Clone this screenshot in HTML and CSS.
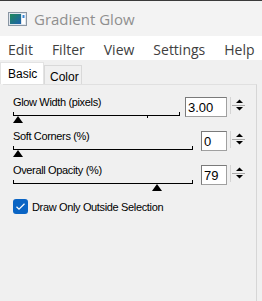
FILE: index.html
```html
<!DOCTYPE html>
<html lang="en">
  <head>
    <meta charset="UTF-8" />
    <meta name="viewport" content="width=device-width, initial-scale=1.0" />
    <title>Gradient Glow</title>
    <link rel="stylesheet" href="styles.css">
  </head>
  <body>
    <div class="window">
      <div class="titlebar">
        <svg class="app-icon" width="19" height="14" viewBox="0 0 19 14">
          <defs>
            <linearGradient id="glow" x1="0" y1="0" x2="1" y2="1">
              <stop offset="0" stop-color="#1f8a5a" />
              <stop offset="1" stop-color="#1d5fae" />
            </linearGradient>
          </defs>
          <rect x="0.5" y="0.5" width="18" height="13" fill="#dfe6ee" stroke="#8a96a3" />
          <rect x="2" y="2" width="11" height="10" fill="url(#glow)" />
          <rect x="14" y="2" width="3" height="10" fill="#ffffff" />
          <rect x="14.5" y="3" width="2" height="3" fill="#3a86d4" />
        </svg>
        <span class="title">Gradient Glow</span>
      </div>

      <nav class="menubar">
        <span>Edit</span>
        <span>Filter</span>
        <span>View</span>
        <span>Settings</span>
        <span>Help</span>
      </nav>

      <div class="tabs">
        <div class="tab active">Basic</div>
        <div class="tab">Color</div>
      </div>

      <div class="panel">
        <div class="setting">
          <div class="setting-main">
            <div class="label">Glow Width (pixels)</div>
            <div class="track">
              <div class="rail"></div>
              <span class="tick" style="left: 134px"></span>
              <span class="thumb" style="left: 0px"></span>
            </div>
          </div>
          <div class="number wide">3.00</div>
          <svg class="spin" width="15" height="17" viewBox="0 0 15 17">
            <line x1="0.5" y1="0" x2="0.5" y2="17" stroke="#d4d4d4" />
            <polygon points="6,6 9.5,2.5 13,6" fill="#000" />
            <line x1="2" y1="8.5" x2="15" y2="8.5" stroke="#a8a8a8" />
            <polygon points="6,10 13,10 9.5,13.5" fill="#000" />
          </svg>
        </div>

        <div class="setting">
          <div class="setting-main">
            <div class="label">Soft Corners (%)</div>
            <div class="track">
              <div class="rail"></div>
              <span class="thumb" style="left: 0px"></span>
            </div>
          </div>
          <div class="number">0</div>
          <svg class="spin" width="15" height="17" viewBox="0 0 15 17">
            <line x1="0.5" y1="0" x2="0.5" y2="17" stroke="#d4d4d4" />
            <polygon points="6,6 9.5,2.5 13,6" fill="#000" />
            <line x1="2" y1="8.5" x2="15" y2="8.5" stroke="#a8a8a8" />
            <polygon points="6,10 13,10 9.5,13.5" fill="#000" />
          </svg>
        </div>

        <div class="setting">
          <div class="setting-main">
            <div class="label">Overall Opacity (%)</div>
            <div class="track">
              <div class="rail"></div>
              <span class="thumb" style="left: 139px"></span>
            </div>
          </div>
          <div class="number">79</div>
          <svg class="spin" width="15" height="17" viewBox="0 0 15 17">
            <line x1="0.5" y1="0" x2="0.5" y2="17" stroke="#d4d4d4" />
            <polygon points="6,6 9.5,2.5 13,6" fill="#000" />
            <line x1="2" y1="8.5" x2="15" y2="8.5" stroke="#a8a8a8" />
            <polygon points="6,10 13,10 9.5,13.5" fill="#000" />
          </svg>
        </div>

        <label class="check">
          <span class="check-box">
            <svg width="15" height="15" viewBox="0 0 15 15">
              <polyline points="3.5,7.8 6,10.2 11.5,4.8" fill="none" stroke="#fff" stroke-width="1.2" />
            </svg>
          </span>
          Draw Only Outside Selection
        </label>
      </div>
    </div>
  </body>
</html>
```

FILE: styles.css
```css
* {
  box-sizing: border-box;
  margin: 0;
  padding: 0;
}

body {
  background: #f0f0f0;
  font-family: "Liberation Sans", Arial, sans-serif;
}

.window {
  width: 262px;
  height: 301px;
  background: #f0f0f0;
  overflow: hidden;
}

.titlebar {
  height: 36px;
  display: flex;
  align-items: center;
  padding-left: 8px;
  background: #f3f3f3;
  border-top: 1px solid #3a3a3a;
}

.app-icon {
  margin-top: 1px;
}

.title {
  margin-left: 7px;
  font-family: "Open Sans", sans-serif;
  font-size: 15px;
  color: #8f8f8f;
}

.menubar {
  height: 24px;
  display: flex;
  align-items: center;
  gap: 19px;
  padding: 2px 0 0 8px;
  background: #ffffff;
  font-family: "Open Sans", sans-serif;
  font-size: 14px;
  color: #404040;
}

.tabs {
  height: 24px;
  display: flex;
  align-items: flex-end;
  padding-top: 2px;
}

.tab {
  height: 19px;
  width: 38px;
  padding: 4px 0 0 5px;
  font-size: 12px;
  color: #000;
  background: #f0f0f0;
  border: 1px solid #d9d9d9;
  border-bottom: none;
}

.tab.active {
  height: 22px;
  width: 44px;
  padding: 4px 0 0 7px;
  background: #ffffff;
  border-color: #e3e3e3;
}

.panel {
  height: 217px;
  width: 254px;
  margin-left: 3px;
  padding: 11px 11px 0 10px;
  background: #f0f0f0;
  border-top: 1px solid #e0e0e0;
  border-right: 1px solid #d6d6d6;
  font-size: 11px;
  letter-spacing: -0.35px;
  color: #000;
}

.setting {
  height: 34px;
  display: flex;
  align-items: flex-start;
}

.setting-main {
  flex: 1;
}

.label {
  height: 13px;
  line-height: 13px;
}

.track {
  position: relative;
  height: 12px;
  margin-right: 8px;
}

.setting:first-child .track {
  margin-right: 5px;
}

.rail {
  height: 4px;
  margin-top: 3px;
  border: 1px solid #000;
  border-top: none;
}

.tick {
  position: absolute;
  top: 3px;
  width: 1px;
  height: 3px;
  background: #000;
}

.thumb {
  position: absolute;
  top: 4px;
  width: 0;
  height: 0;
  border-left: 5.5px solid transparent;
  border-right: 5.5px solid transparent;
  border-bottom: 7px solid #000;
}

.number {
  width: 26px;
  height: 20px;
  margin-top: 1px;
  padding: 2px 0 0 2px;
  background: #fff;
  border: 1px solid #7a7a7a;
  border-right-color: #a0a0a0;
  border-bottom-color: #a0a0a0;
  font-size: 13px;
  line-height: 15px;
  letter-spacing: 0;
}

.number.wide {
  width: 42px;
}

.spin {
  margin-left: 3px;
  margin-top: 1px;
}

.check {
  display: flex;
  align-items: center;
  margin-top: 1px;
  gap: 4px;
}

.check-box {
  width: 15px;
  height: 15px;
  border-radius: 3px;
  background: #0a64c4;
  display: flex;
}
```
